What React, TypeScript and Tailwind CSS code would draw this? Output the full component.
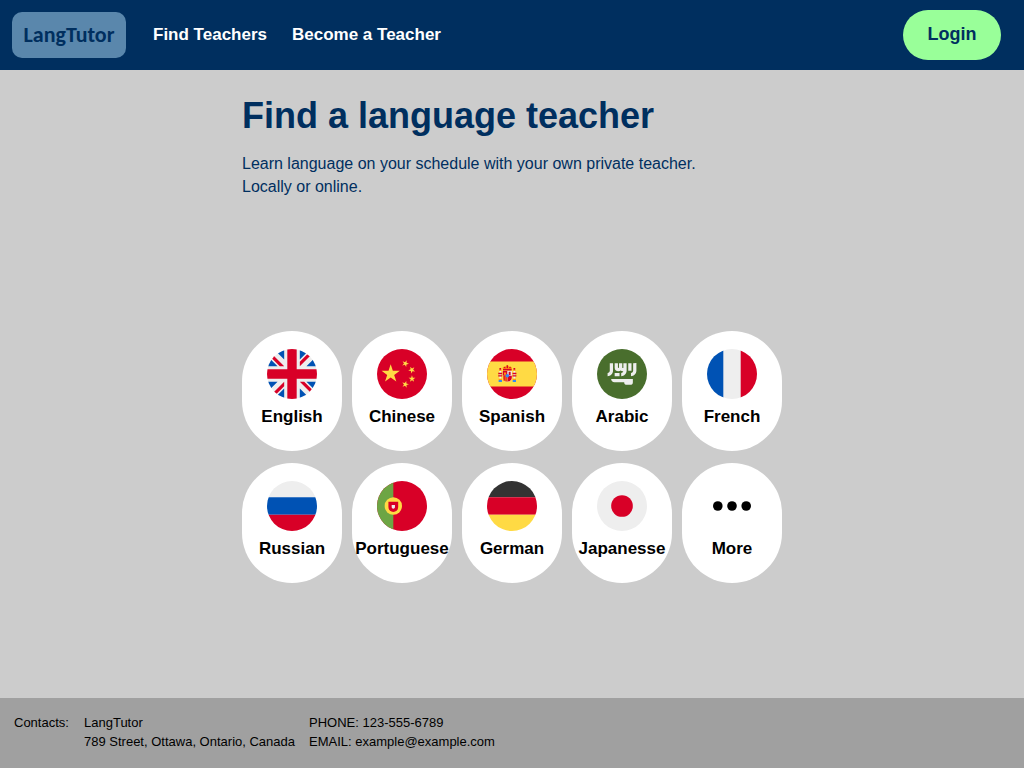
import type { ReactNode } from "react";

function Flag({ id, children }: { id: string; children: ReactNode }) {
  return (
    <svg viewBox="0 0 512 512" className="size-[50px] shrink-0" aria-hidden="true">
      <clipPath id={`flag-${id}`}>
        <circle cx="256" cy="256" r="256" />
      </clipPath>
      <g clipPath={`url(#flag-${id})`}>{children}</g>
    </svg>
  );
}

function Stripes({ colors }: { colors: [string, string, string] }) {
  return (
    <>
      <path fill={colors[0]} d="M0 0h512v167H0z" />
      <path fill={colors[1]} d="M0 167h512v178H0z" />
      <path fill={colors[2]} d="M0 345h512v167H0z" />
    </>
  );
}

const languages: { name: string; icon: ReactNode }[] = [
  {
    name: "English",
    icon: (
      <Flag id="uk">
        <path fill="#eee" d="M0 0h512v512H0z" />
        <path
          fill="#0052b4"
          d="M336 0v108L444 0zm176 68L404 176h108zM0 176h108L0 68zM68 0l108 108V0zm108 512V404L68 512zM0 444l108-108H0zm512-108H404l108 108zm-68 176L336 404v108z"
        />
        <path
          fill="#d80027"
          d="M0 0v45l131 131h45L0 0zm208 0v208H0v96h208v208h96V304h208v-96H304V0h-96zm259 0L336 131v45L512 0h-45zM176 336 0 512h45l131-131v-45zm160 0 176 176v-45L381 336h-45z"
        />
      </Flag>
    ),
  },
  {
    name: "Chinese",
    icon: (
      <Flag id="cn">
        <path fill="#d80027" d="M0 0h512v512H0z" />
        <path
          fill="#ffda44"
          d="m140.1 155.8 22.1 68h71.5l-57.8 42.1 22.1 68-57.9-42-57.9 42 22.2-68-57.9-42.1H118zm163.4 240.7-16.9-20.8-25 9.7 14.5-22.5-16.9-20.9 25.9 6.9 14.6-22.5 1.4 26.8 26 6.9-25.1 9.6zm33.6-61 8-25.6-21.9-15.5 26.8-.4 7.9-25.6 8.7 25.4 26.8-.3-21.5 16 8.6 25.4-21.9-15.5zm45.3-147.6L370.6 212l19.2 18.7-26.5-3.8-11.8 24-4.6-26.4-26.6-3.8 23.8-12.5-4.6-26.5 19.2 18.7zm-78.2-73-2 26.7 24.9 10.1-26.1 6.4-1.9 26.8-14.1-22.8-26.1 6.4 17.3-20.5-14.2-22.7 24.9 10.1z"
        />
      </Flag>
    ),
  },
  {
    name: "Spanish",
    icon: (
      <Flag id="es">
        <path fill="#d80027" d="M0 0h512v512H0z" />
        <path fill="#ffda44" d="M0 128h512v256H0z" />
        <path fill="#eee" d="M127 222h18v82h-18zM271 222h18v82h-18z" />
        <path fill="#338af3" d="M119 318h34v20h-34zM263 318h34v20h-34z" />
        <path fill="#ff9811" d="M119 304h34v14h-34zM263 304h34v14h-34zM123 212h26v10h-26zM267 212h26v10h-26z" />
        <path
          fill="#d80027"
          d="M127 194h18v18h-18zM271 194h18v18h-18zM115 244h40v14h-40zM115 270h40v12h-40zM261 244h40v14h-40zM261 270h40v12h-40z"
        />
        <path fill="#ff9811" d="M166 214q-10-12-4-24 10-14 26-10 4-12 20-14 16 2 20 14 16-4 26 10 6 12-4 24z" />
        <path
          fill="#d80027"
          d="M164 220v-16h88v16zM168 198l10-16 20 16zM201 198v-32h14v32zM218 198l20-16 10 16z"
        />
        <path fill="#eee" d="M162 224h92v72a46 40 0 0 1-92 0z" />
        <path fill="#d80027" d="M162 224h46v50h-46zM208 274h46v22q-4 32-46 40z" />
        <path fill="#d80027" d="M222 232h20v36h-20z" />
        <path fill="#ff9811" d="M174 240h22v24h-22zM162 274h46v62q-42-8-46-40z" />
        <path fill="#d80027" d="M170 274h12v52h-12zM190 274h10v60h-10z" />
        <circle cx="208" cy="274" r="18" fill="#338af3" />
      </Flag>
    ),
  },
  {
    name: "Arabic",
    icon: (
      <Flag id="sa">
        <path fill="#496e2d" d="M0 0h512v512H0z" />
        <g fill="#eee">
          <path d="M144.7 306c0 18.5 15 33.5 33.4 33.5h100.2a27.8 27.8 0 0 0 27.8 27.8h33.4a27.8 27.8 0 0 0 27.8-27.8V306zm225.4-161.3v78c0 12.2-10 22.2-22.3 22.2v33.4c30.7 0 55.7-25 55.7-55.7v-78zm-239.3 78c0 12.3-10 22.3-22.3 22.3v33.4c30.7 0 55.7-25 55.7-55.7v-78h-33.4z" />
          <path d="M320 144.7h33.4v78H320zm-50 44.5a5.6 5.6 0 0 1-11.2 0v-44.5h-33.4v44.5a5.6 5.6 0 0 1-11.1 0v-44.5h-33.4v44.5a39 39 0 0 0 39 39 38.7 38.7 0 0 0 22.2-7 38.7 38.7 0 0 0 22.3 7c1.7 0 3.4-.1 5-.3a22.3 22.3 0 0 1-21.6 17v33.4c30.6 0 55.6-25 55.6-55.7v-77.9H270z" />
          <path d="M180.9 244.9h50v33.4h-50z" />
        </g>
      </Flag>
    ),
  },
  {
    name: "French",
    icon: (
      <Flag id="fr">
        <path fill="#eee" d="M0 0h512v512H0z" />
        <path fill="#0052b4" d="M0 0h167v512H0z" />
        <path fill="#d80027" d="M345 0h167v512H345z" />
      </Flag>
    ),
  },
  {
    name: "Russian",
    icon: (
      <Flag id="ru">
        <Stripes colors={["#eee", "#0052b4", "#d80027"]} />
      </Flag>
    ),
  },
  {
    name: "Portuguese",
    icon: (
      <Flag id="pt">
        <path fill="#d80027" d="M0 0h512v512H0z" />
        <path fill="#6da544" d="M0 0h167v512H0z" />
        <circle cx="167" cy="256" r="89" fill="#ffda44" />
        <path fill="#d80027" d="M116.9 211.5V267a50 50 0 1 0 100.1 0v-55.6z" />
        <path fill="#eee" d="M167 283.8c-9.2 0-16.7-7.5-16.7-16.7V245h33.4v22c0 9.2-7.5 16.7-16.7 16.7z" />
      </Flag>
    ),
  },
  {
    name: "German",
    icon: (
      <Flag id="de">
        <Stripes colors={["#333", "#d80027", "#ffda44"]} />
      </Flag>
    ),
  },
  {
    name: "Japanesse",
    icon: (
      <Flag id="jp">
        <path fill="#eee" d="M0 0h512v512H0z" />
        <circle cx="256" cy="256" r="111" fill="#d80027" />
      </Flag>
    ),
  },
  {
    name: "More",
    icon: (
      <svg viewBox="0 0 50 50" className="size-[50px] shrink-0" aria-hidden="true">
        <circle cx="10.8" cy="25" r="4.8" />
        <circle cx="25" cy="25" r="4.8" />
        <circle cx="39.2" cy="25" r="4.8" />
      </svg>
    ),
  },
];

export default function App() {
  return (
    <div className="flex min-h-screen flex-col bg-[#ccc] font-['Liberation_Sans',Arial,sans-serif] text-black">
      <header className="flex items-center bg-[#002f5f] py-[10px] pr-[23px] pl-3">
        <a
          href="#home"
          className="flex h-[46px] w-[114px] items-center justify-center rounded-[10px] bg-[#5a87ac] pb-[2px] font-['Carlito','Lato',sans-serif] text-[22px] font-bold text-[#002f5f]"
        >
          LangTutor
        </a>
        <nav className="ml-[27px] flex gap-[25px] text-[17px] font-bold text-white">
          <a href="#teachers">Find Teachers</a>
          <a href="#become">Become a Teacher</a>
        </nav>
        <button
          type="button"
          className="ml-auto h-[50px] w-[98px] rounded-full bg-[#9f9] pb-[2px] text-lg font-bold text-[#002f5f]"
        >
          Login
        </button>
      </header>

      <main className="mx-auto w-full max-w-[540px] flex-1 pt-6 pb-12 text-[#002f5f]">
        <h1 className="text-4xl leading-[44px] font-bold">Find a language teacher</h1>
        <p className="mt-[14px] leading-[23px]">
          Learn language on your schedule with your own private teacher.
          <br />
          Locally or online.
        </p>
        <ul className="mt-[133px] flex flex-wrap gap-x-[10px] gap-y-3">
          {languages.map((language) => (
            <li key={language.name}>
              <a
                href={`#${language.name.toLowerCase()}`}
                className="flex h-[120px] w-[100px] flex-col items-center gap-2 rounded-full bg-white pt-[18px] text-[17px] leading-5 font-bold text-black"
              >
                {language.icon}
                {language.name}
              </a>
            </li>
          ))}
        </ul>
      </main>

      <footer className="flex flex-wrap gap-x-[14px] bg-[#a0a0a0] px-[14px] pt-[15px] pb-[17px] text-[13px] leading-[19px]">
        <p className="min-w-14">Contacts:</p>
        <address className="not-italic">
          LangTutor
          <br />
          789 Street, Ottawa, Ontario, Canada
        </address>
        <p>
          PHONE: 123-555-6789
          <br />
          EMAIL: example@example.com
        </p>
      </footer>
    </div>
  );
}
